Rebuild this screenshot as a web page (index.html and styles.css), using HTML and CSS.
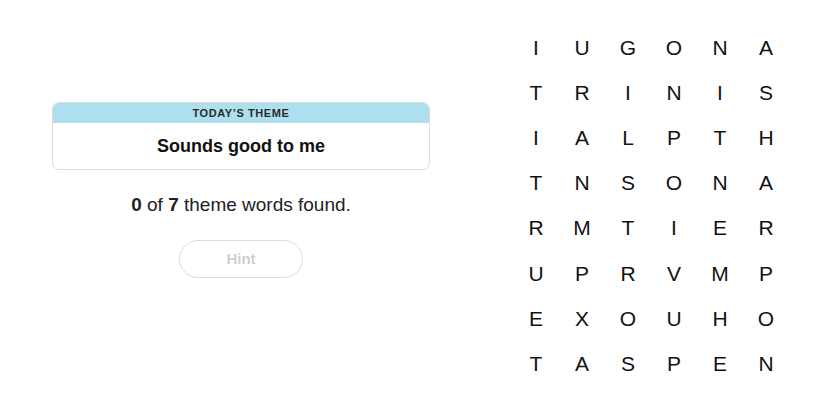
FILE: index.html
```html
<!DOCTYPE html>
<html>
<head>
<meta charset="utf-8">
<link rel="stylesheet" href="styles.css">
</head>
<body>
<div class="page">
  <div class="left">
    <div class="theme">
      <div class="theme-head">TODAY’S THEME</div>
      <div class="theme-body">Sounds good to me</div>
    </div>
    <p class="count"><b>0</b> of <b>7</b> theme words found.</p>
    <button class="hint">Hint</button>
  </div>
  <div class="board">
    <span>I</span><span>U</span><span>G</span><span>O</span><span>N</span><span>A</span>
    <span>T</span><span>R</span><span>I</span><span>N</span><span>I</span><span>S</span>
    <span>I</span><span>A</span><span>L</span><span>P</span><span>T</span><span>H</span>
    <span>T</span><span>N</span><span>S</span><span>O</span><span>N</span><span>A</span>
    <span>R</span><span>M</span><span>T</span><span>I</span><span>E</span><span>R</span>
    <span>U</span><span>P</span><span>R</span><span>V</span><span>M</span><span>P</span>
    <span>E</span><span>X</span><span>O</span><span>U</span><span>H</span><span>O</span>
    <span>T</span><span>A</span><span>S</span><span>P</span><span>E</span><span>N</span>
  </div>
</div>
</body>
</html>
```

FILE: styles.css
```css
html, body {
  margin: 0;
  padding: 0;
  background: #fff;
  font-family: "Liberation Sans", Arial, sans-serif;
  color: #121212;
}
.page {
  display: flex;
  align-items: flex-start;
  width: 825px;
  height: 413px;
}
.left {
  width: 482px;
  display: flex;
  flex-direction: column;
  align-items: center;
  padding-top: 102px;
}
.theme {
  width: 376px;
  border: 1px solid #dcdcdc;
  border-radius: 7px;
  overflow: hidden;
}
.theme-head {
  background: #aedfee;
  height: 20px;
  line-height: 20px;
  text-align: center;
  font-size: 11px;
  letter-spacing: 0.6px;
  color: #2a2a2a;
  font-weight: 600;
}
.theme-body {
  height: 46px;
  line-height: 46px;
  text-align: center;
  font-size: 18px;
  font-weight: bold;
  color: #121212;
}
.count {
  margin: 24px 0 0;
  font-size: 19px;
  line-height: 22px;
  color: #222;
}
.count b {
  font-weight: bold;
}
.hint {
  margin-top: 24px;
  width: 124px;
  height: 38px;
  border: 1.5px solid #dcdcdc;
  border-radius: 20px;
  background: #fff;
  color: #cfcfcf;
  font-family: "Liberation Sans", Arial, sans-serif;
  font-size: 15px;
  font-weight: bold;
  padding: 0 0 2px;
}
.board {
  margin-left: 31px;
  margin-top: 25px;
  display: grid;
  grid-template-columns: repeat(6, 46px);
  grid-auto-rows: 45.2px;
}
.board span {
  display: flex;
  align-items: center;
  justify-content: center;
  font-size: 21px;
  color: #121212;
}
```
